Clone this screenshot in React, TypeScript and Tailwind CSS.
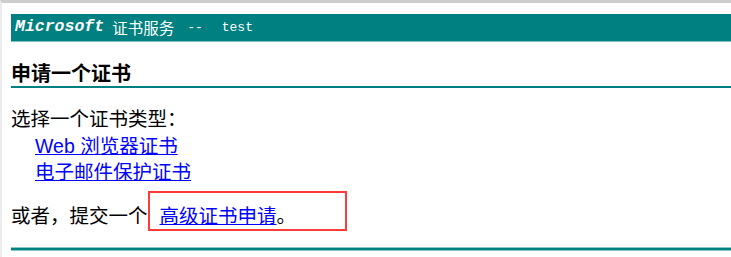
const cjk = "font-['Liberation_Sans','Noto_Sans_CJK_SC',sans-serif]";

export default function App() {
  return (
    <div className="min-h-[257px] border-l-2 border-t-[3px] border-l-[#ececec] border-t-[#cdcdcd] bg-white text-black">
      <div className={`pl-[9px] pt-[11px] ${cjk}`}>
        {/* title bar */}
        <div className="flex h-[28px] items-center border-b border-[#7fbfbf] bg-[#008080] pl-[4px] text-white">
          <span className="font-['Liberation_Mono',monospace] text-[16.5px] font-bold italic leading-none">
            Microsoft
          </span>
          <span className="ml-[8px] font-['Noto_Sans_CJK_SC',sans-serif] text-[15.5px] leading-none">证书服务</span>
          <span className="ml-[13px] font-['Liberation_Mono',monospace] text-[13px] leading-none">--</span>
          <span className="ml-[19px] font-['Liberation_Mono',monospace] text-[13px] leading-none">test</span>
        </div>

        <h2 className="mt-[20px] border-b-2 border-[#008080] text-[20px] font-bold leading-[24px]">
          申请一个证书
        </h2>

        <p className="mt-[18px] text-[19.5px] leading-[26px]">选择一个证书类型：</p>
        <div className="mt-[1px] flex flex-col items-start pl-[24px] text-[19.5px] leading-[26px]">
          <a href="#" className="text-[#0000ff] underline">
            Web 浏览器证书
          </a>
          <a href="#" className="text-[#0000ff] underline">
            电子邮件保护证书
          </a>
        </div>

        <div className="mt-[6px] flex items-start text-[19.5px] leading-[26px]">
          <span className="mt-[12px]">或者，提交一个</span>
          <span className="w-[199px] border-2 border-[#ff3b3b] pl-[10px] pt-[10px]">
            <a href="#" className="text-[#0000ff] underline">
              高级证书申请
            </a>
            。
          </span>
        </div>

        <div className="mt-[16px] h-[4px] border-y border-[#8cc8c8] bg-[#008080]" />
      </div>
    </div>
  );
}
